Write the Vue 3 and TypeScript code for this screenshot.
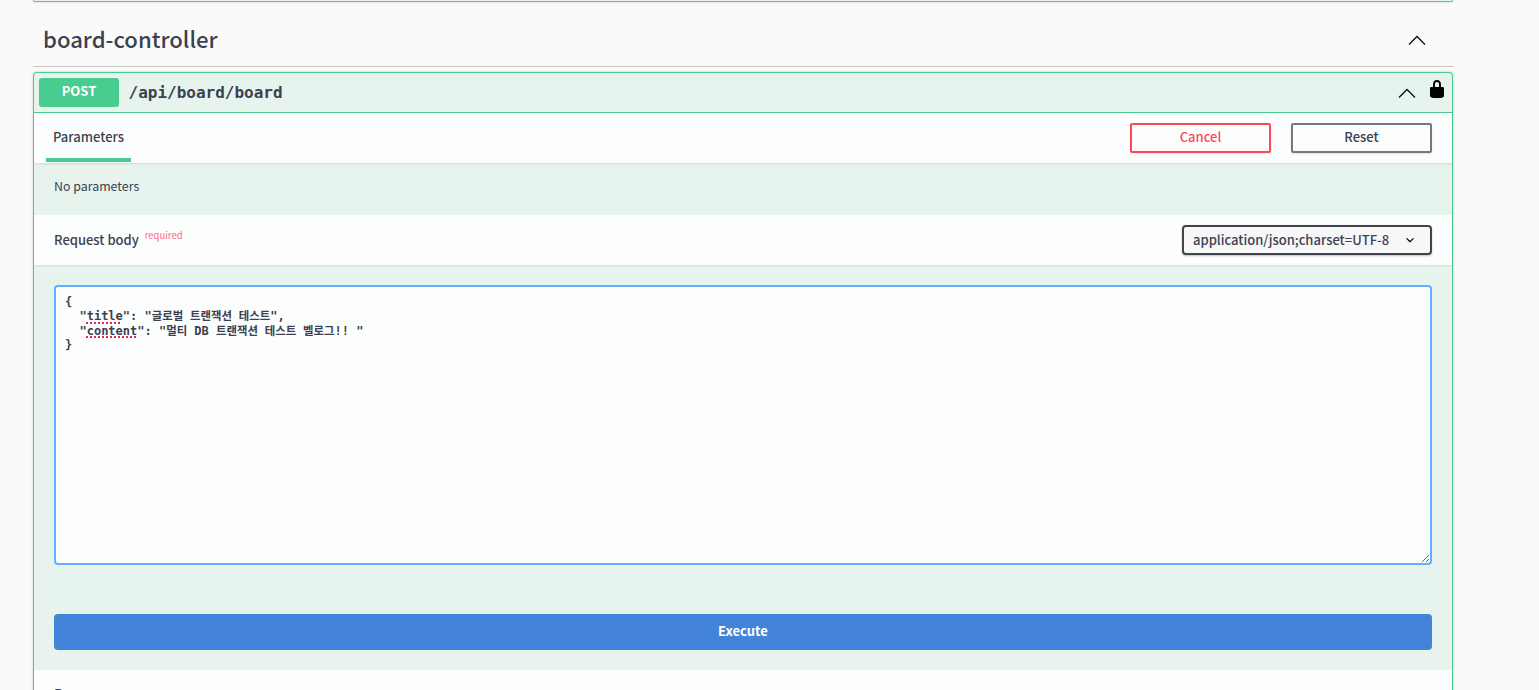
<script setup lang="ts">
const pad = "  ";
</script>

<template>
  <div class="page">
    <div class="prev-card"></div>
    <div class="section-head">
      <h3 class="section-title">board-controller</h3>
      <svg class="section-arrow" width="20" height="20" viewBox="0 0 20 20"><path d="M2 14.5 10 6.5 18 14.5" fill="none" stroke="#111" stroke-width="1.3"/></svg>
    </div>
    <div class="op">
      <div class="op-head">
        <span class="method">POST</span>
        <span class="path">/api/board/board</span>
        <svg class="op-arrow" width="20" height="20" viewBox="0 0 20 20"><path d="M2 14.5 10 6.5 18 14.5" fill="none" stroke="#111" stroke-width="1.3"/></svg>
        <svg class="lock" width="20" height="20" viewBox="0 0 20 20"><path d="M15.8 8H14V5.6C14 2.703 12.665 1 10 1 7.334 1 6 2.703 6 5.6V8H4c-.553 0-1 .646-1 1.199V17c0 .549.428 1.139.951 1.307l1.197.387C5.672 18.861 6.55 19 7.1 19h5.8c.549 0 1.428-.139 1.951-.307l1.196-.387c.524-.167.953-.757.953-1.306V9.199C17 8.646 16.352 8 15.8 8zM12 8H8V5.199C8 3.754 8.797 3 10 3c1.203 0 2 .754 2 2.199V8z"/></svg>
      </div>
      <div class="bar tabs">
        <div class="tab">Parameters</div>
        <div class="actions">
          <button class="btn cancel">Cancel</button>
          <button class="btn reset">Reset</button>
        </div>
      </div>
      <div class="no-params">No parameters</div>
      <div class="bar req">
        <div class="req-label">Request body <sup class="required">required</sup></div>
        <div class="select">
          <span>application/json;charset=UTF-8</span>
          <svg width="20" height="20" viewBox="0 0 20 20"><path d="M13.418 7.859a.695.695 0 0 1 .978 0 .68.68 0 0 1 0 .969l-3.908 3.83a.697.697 0 0 1-.979 0l-3.908-3.83a.68.68 0 0 1 0-.969.695.695 0 0 1 .978 0L10 11l3.418-3.141z"/></svg>
        </div>
      </div>
      <div class="body">
        <div class="editor">
          <div class="line">{</div>
          <div class="line">{{ pad }}"<span class="sq">title</span>": "<span class="ko">글로벌 트랜잭션 테스트</span>",</div>
          <div class="line">{{ pad }}"<span class="sq">content</span>": "<span class="ko">멀티</span> DB <span class="ko">트랜잭션 테스트 벨로그</span>!! "</div>
          <div class="line">}</div>
        </div>
        <button class="execute">Execute</button>
      </div>
      <div class="bar foot">
        <div class="foot-label">Responses</div>
      </div>
    </div>
  </div>
</template>

<style>
html, body { margin: 0; height: 690px; overflow: hidden; background: #fafafa; }
</style>

<style scoped>
.page {
  width: 1420px;
  margin-left: 33px;
  font-family: "Noto Sans CJK KR", "Noto Sans", sans-serif;
  color: #3b4151;
}
.prev-card {
  height: 1px;
  border: 1px solid #49cc90;
  border-top: 0;
  border-radius: 0 0 4px 4px;
  background: #e6f4ed;
  box-shadow: 0 0 3px rgba(0, 0, 0, .19);
}
.section-head {
  display: flex;
  align-items: center;
  height: 52px;
  padding: 12px 26px 0 10px;
  border-bottom: 1px solid #c5c5c6;
  box-sizing: content-box;
}
.section-title {
  margin: 0 0 4px;
  flex: 1;
  font-size: 22.1px;
  font-weight: 500;
  line-height: 1;
}
.section-arrow { display: block; }
.op {
  margin-top: 5px;
  border: 1px solid #49cc90;
  border-bottom: 0;
  border-radius: 4px 4px 0 0;
  box-shadow: 0 0 3px rgba(0, 0, 0, .19);
  background: #e6f4ed;
}
.op-head {
  display: flex;
  align-items: center;
  height: 39px;
  padding: 0 5px;
  border-bottom: 1px solid #49cc90;
}
.method {
  width: 80px;
  height: 29px;
  background: #49cc90;
  color: #fff;
  border-radius: 3px;
  font-size: 13px;
  font-weight: 700;
  line-height: 26px;
  text-align: center;
}
.path {
  margin-left: 9.5px;
  flex: 1;
  font-family: "DejaVu Sans Mono", "Liberation Mono", monospace;
  font-size: 16px;
  font-weight: 700;
  line-height: 29px;
}
.op-arrow { margin-right: 10px; margin-top: 1px; }
.lock { margin-right: 0; margin-top: -7px; }
.bar {
  display: flex;
  align-items: center;
  justify-content: space-between;
  background: #fcfefd;
  box-shadow: 0 1px 2px rgba(0, 0, 0, .1);
  padding: 0 20px;
  position: relative;
}
.tabs { height: 50px; align-items: flex-start; }
.tab {
  margin-left: -8px;
  width: 85px;
  height: 49px;
  box-sizing: border-box;
  padding-top: 15px;
  text-align: center;
  font-size: 13px;
  font-weight: 500;
  line-height: 18px;
  border-bottom: 4px solid #49cc90;
}
.actions { display: flex; gap: 20px; margin-top: 10px; }
.btn {
  width: 141px;
  height: 30px;
  box-sizing: border-box;
  background: transparent;
  border: 2px solid #787878;
  border-radius: 2px;
  box-shadow: 0 1px 2px rgba(0, 0, 0, .1);
  font: 500 13px/24px "Noto Sans CJK KR", "Noto Sans", sans-serif;
  color: #3b4151;
  padding: 0 0 2px;
}
.cancel { border-color: #ff4757; color: #ff4757; }
.no-params {
  height: 52px;
  box-sizing: border-box;
  padding: 0 20px;
  font-size: 12.4px;
  line-height: 46px;
}
.req { height: 50px; }
.req-label { font-size: 13px; font-weight: 500; line-height: 18px; }
.required {
  font-size: 9.5px;
  font-weight: 400;
  color: #ff6b81;
  line-height: 1;
  vertical-align: 6px;
  margin-left: 3px;
}
.select {
  width: 250px;
  height: 30px;
  box-sizing: border-box;
  border: 2px solid #41444e;
  border-radius: 4px;
  background: #f7f7f7;
  box-shadow: 0 1px 2px rgba(0, 0, 0, .25);
  display: flex;
  align-items: center;
  justify-content: space-between;
  padding: 0 12px 0 9px;
  font-size: 13px;
  font-weight: 500;
}
.select span { position: relative; top: -1px; }
.select svg { width: 16px; height: 16px; }
.body { padding: 20px 20px 20px; }
.editor {
  box-sizing: border-box;
  height: 280px;
  padding: 8px 9px;
  background: #fcfefd;
  border: 2px solid #61affe;
  border-radius: 4px;
  font-family: "DejaVu Sans Mono", "Noto Sans CJK KR", monospace;
  font-size: 12px;
  font-weight: 700;
  line-height: 14.3px;
  white-space: pre;
  resize: vertical;
  overflow: auto;
}
.line { height: 14.3px; }
.ko { font-size: 11.4px; line-height: 0; }
.sq { text-decoration: underline dotted #e8264c 2px; text-underline-offset: 2px; }
.execute {
  display: block;
  width: 100%;
  height: 36px;
  margin-top: 49px;
  padding: 0 0 4px;
  border: 0;
  border-radius: 4px;
  background: #4484d8;
  color: #fff;
  font: 700 13px/1 "Noto Sans CJK KR", "Noto Sans", sans-serif;
}
.foot { height: 60px; box-shadow: none; align-items: flex-start; }
.foot-label { font-size: 14px; font-weight: 500; line-height: 18px; padding-top: 15px; }
</style>
